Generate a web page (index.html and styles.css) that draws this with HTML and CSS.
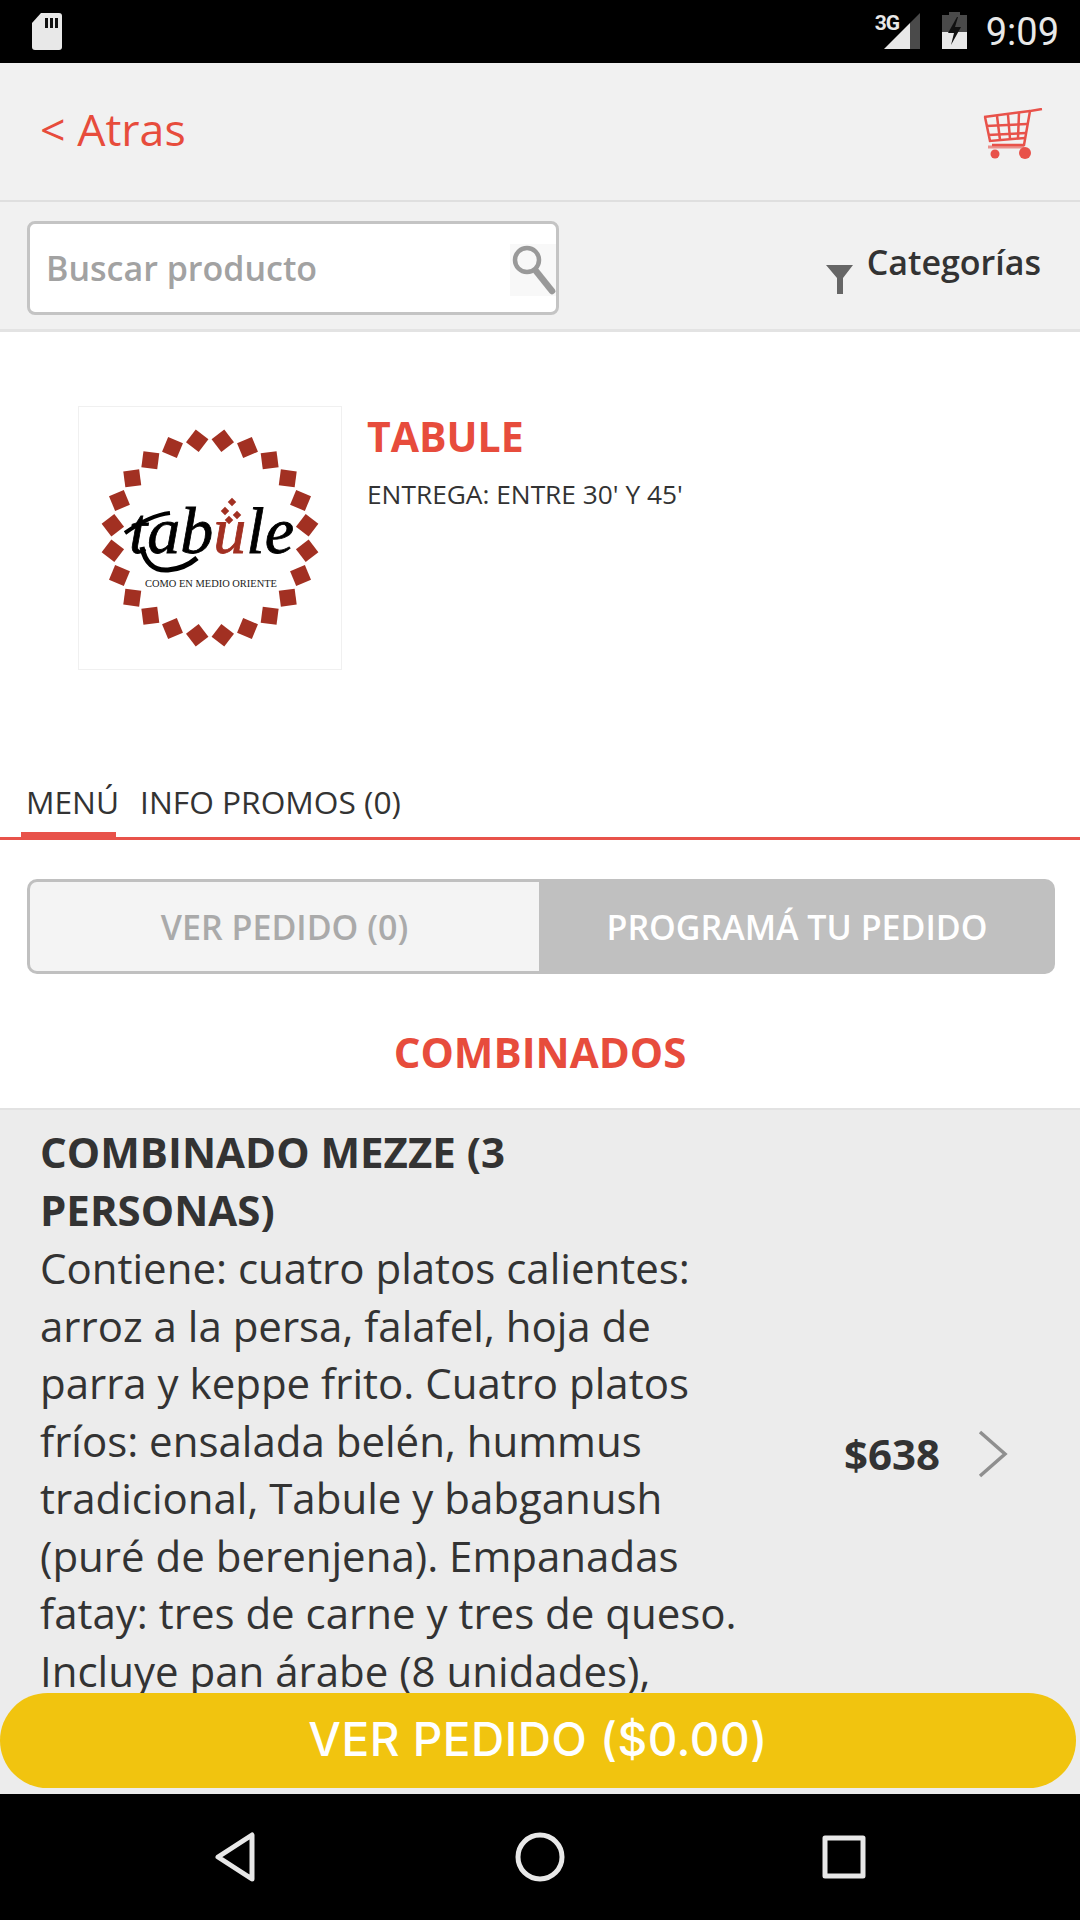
FILE: index.html
```html
<!DOCTYPE html>
<html lang="es">
<head>
    <meta charset="UTF-8">
    <meta name="viewport" content="width=device-width, initial-scale=1.0">
    <title>Tabule</title>
    <link rel="stylesheet" href="styles.css">
</head>
<body>
    <div class="screen">
        <div class="status-bar">
            <svg class="sd-icon" width="30" height="37" viewBox="0 0 30 37">
                <path d="M9 0h18a3 3 0 0 1 3 3v31a3 3 0 0 1-3 3H3a3 3 0 0 1-3-3V10z" fill="#e8e8e8"/>
                <path d="M13 5h3v10h-3zM18 5h3v10h-3zM23 5h3v10h-3z" fill="#111"/>
            </svg>
            <div class="status-right">
                <span class="net-label">3G</span>
                <svg class="signal-icon" width="36" height="36" viewBox="0 0 36 36">
                    <path d="M36 0v36H26V10z" fill="#4a4a4a"/>
                    <path d="M26 10v26H0z" fill="#e8e8e8"/>
                </svg>
                <svg class="battery-icon" width="25" height="37" viewBox="0 0 25 37">
                    <path d="M7 0h11v3h7v17H0V3h7z" fill="#4a4a4a"/>
                    <path d="M0 20h25v17H0z" fill="#e8e8e8"/>
                    <path d="M15 5L6 21h6l-3 12 10-18h-6l3-10z" fill="#111"/>
                </svg>
                <span class="clock">9:09</span>
            </div>
        </div>

        <div class="content">
            <div class="top-bar">
                <span class="back-link">&lt; Atras</span>
                <svg class="cart-icon" width="60" height="54" viewBox="0 0 60 54" fill="none" stroke="#e8524a">
                    <path d="M59 1L47 3l-6 34H9" stroke-width="2.5"/>
                    <path d="M1 9l46-6M3 18l41-2M5 27l38-2M2 9l5 24 35-3" stroke-width="2.5"/>
                    <path d="M14 8l3 24M25 7l2 24M36 5l-1 25" stroke-width="2.5"/>
                    <path d="M5 39h36" stroke-width="3" opacity=".6"/>
                    <circle cx="12" cy="46" r="4.5" fill="#e8524a" stroke="none"/>
                    <circle cx="42" cy="45" r="6" fill="#e8524a" stroke="none"/>
                </svg>
            </div>

            <div class="search-bar">
                <div class="search-box">
                    <span class="search-text">Buscar producto</span>
                    <svg class="search-icon" width="46" height="52" viewBox="0 0 46 52" fill="none" stroke="#999">
                        <rect width="46" height="52" fill="#f8f8f8" stroke="none"/>
                        <circle cx="17" cy="16" r="12" stroke-width="4.5"/>
                        <path d="M26 27l16 20" stroke-width="6.5" stroke-linecap="round"/>
                    </svg>
                </div>
                <div class="category-filter">
                    <svg class="filter-icon" width="27" height="29" viewBox="0 0 27 29">
                        <path d="M0 0h27L17 13v16h-6V13z" fill="#666"/>
                    </svg>
                    <span class="category-text">Categorías</span>
                </div>
            </div>

            <div class="shop-info">
                <div class="shop-logo">
                    <svg width="262" height="262" viewBox="0 0 262 262">
                        <defs>
                            <g id="quarter" fill="#a23022">
                                <rect x="123" y="25" width="16" height="16" transform="rotate(7.5 131 131) rotate(45 131 33)"/>
                                <rect x="123" y="25" width="16" height="16" transform="rotate(22.5 131 131) rotate(45 131 33)"/>
                                <rect x="123" y="25" width="16" height="16" transform="rotate(37.5 131 131) rotate(45 131 33)"/>
                                <rect x="123" y="25" width="16" height="16" transform="rotate(52.5 131 131) rotate(45 131 33)"/>
                                <rect x="123" y="25" width="16" height="16" transform="rotate(67.5 131 131) rotate(45 131 33)"/>
                                <rect x="123" y="25" width="16" height="16" transform="rotate(82.5 131 131) rotate(45 131 33)"/>
                            </g>
                        </defs>
                        <use href="#quarter"/>
                        <use href="#quarter" transform="rotate(90 131 131)"/>
                        <use href="#quarter" transform="rotate(180 131 131)"/>
                        <use href="#quarter" transform="rotate(270 131 131)"/>
                        <text class="logo-word" x="50" y="146">tab<tspan class="logo-red">u</tspan>le</text>
                        <rect x="150" y="92" width="6" height="6" fill="#a23022" transform="rotate(45 153 95)"/>
                        <rect x="143" y="101" width="6" height="6" fill="#a23022" transform="rotate(45 146 104)"/>
                        <rect x="155" y="105" width="6" height="6" fill="#a23022" transform="rotate(45 158 108)"/>
                        <rect x="147" y="110" width="6" height="6" fill="#a23022" transform="rotate(45 150 113)"/>
                        <path d="M46 126c14-10 28-18 45-20" fill="none" stroke="#000" stroke-width="4"/>
                        <path d="M63 140c3 16 12 24 26 23 13-1 22-6 29-12" fill="none" stroke="#000" stroke-width="5"/>
                        <text class="logo-tag" x="66" y="180" textLength="132" lengthAdjust="spacingAndGlyphs">COMO EN MEDIO ORIENTE</text>
                    </svg>
                </div>
                <div class="shop-details">
                    <h1 class="shop-name">TABULE</h1>
                    <p class="shop-delivery">ENTREGA: ENTRE 30' Y 45'</p>
                </div>
            </div>

            <div class="tabs">
                <span class="tab tab-active">MENÚ</span>
                <span class="tab">INFO PROMOS (0)</span>
            </div>

            <div class="order-buttons">
                <div class="order-btn order-btn-light">VER PEDIDO (0)</div>
                <div class="order-btn order-btn-dark">PROGRAMÁ TU PEDIDO</div>
            </div>

            <h2 class="section-title">COMBINADOS</h2>

            <div class="product">
                <div class="product-text">
                    <h3 class="product-name">COMBINADO MEZZE (3 PERSONAS)</h3>
                    <p class="product-desc">Contiene: cuatro platos calientes: arroz a la persa, falafel, hoja de parra y keppe frito. Cuatro platos fríos: ensalada belén, hummus tradicional, Tabule y babganush (puré de berenjena). Empanadas fatay: tres de carne y tres de queso. Incluye pan árabe (8 unidades),</p>
                </div>
                <span class="product-price">$638</span>
                <svg class="chevron" width="30" height="48" viewBox="0 0 30 48" fill="none" stroke="#8f8f8f" stroke-width="3.5">
                    <path d="M2 2l25 22L2 46"/>
                </svg>
            </div>

            <div class="cart-button">VER PEDIDO ($0.00)</div>
        </div>

        <div class="nav-bar">
            <svg width="40" height="50" viewBox="0 0 40 50" fill="none" stroke="#e8e8e8" stroke-width="5" stroke-linejoin="round">
                <path d="M37 3v44L3 25z"/>
            </svg>
            <svg width="50" height="50" viewBox="0 0 50 50" fill="none" stroke="#e8e8e8" stroke-width="5">
                <circle cx="25" cy="25" r="22"/>
            </svg>
            <svg width="44" height="44" viewBox="0 0 44 44" fill="none" stroke="#e8e8e8" stroke-width="5" stroke-linejoin="round">
                <rect x="3" y="3" width="38" height="38"/>
            </svg>
        </div>
    </div>
</body>
</html>
```

FILE: styles.css
```css
* {
    box-sizing: border-box;
}

body {
    margin: 0;
    background-color: #fff;
    font-family: "Open Sans", sans-serif;
}

.screen {
    width: 1080px;
    height: 1920px;
    display: flex;
    flex-direction: column;
    overflow: hidden;
}

.status-bar {
    height: 63px;
    flex: none;
    background-color: #000;
    display: flex;
    justify-content: space-between;
    align-items: flex-start;
    padding: 13px 21px 0 32px;
}

.status-right {
    display: flex;
    align-items: flex-start;
}

.net-label {
    font-family: Roboto, sans-serif;
    font-size: 21px;
    font-weight: 700;
    line-height: 20px;
    color: #e8e8e8;
    width: 24px;
    letter-spacing: -1px;
}

.signal-icon {
    margin-left: -15px;
}

.battery-icon {
    margin-left: 22px;
    margin-top: -1px;
}

.clock {
    font-family: Roboto, sans-serif;
    font-size: 38px;
    line-height: 36px;
    color: #e8e8e8;
    margin-left: 19px;
    margin-top: 1px;
}

.content {
    flex: 1;
    position: relative;
    overflow: hidden;
    display: flex;
    flex-direction: column;
}

.top-bar {
    height: 139px;
    flex: none;
    background-color: #f1f1f1;
    border-bottom: 2px solid #dfdfdf;
    display: flex;
    justify-content: space-between;
    align-items: center;
    padding: 0 37px 0 40px;
}

.back-link {
    font-size: 44.7px;
    line-height: 60px;
    margin-top: -5px;
    color: #e74c3c;
}

.cart-icon {
    margin-top: 6px;
}

.search-bar {
    height: 130px;
    flex: none;
    background-color: #f1f1f1;
    border-bottom: 3px solid #e3e3e3;
    display: flex;
    justify-content: space-between;
    padding: 19px 39px 0 27px;
}

.search-box {
    width: 532px;
    height: 94px;
    background-color: #fff;
    border: 3px solid #c4c4c4;
    border-radius: 8px;
    display: flex;
    justify-content: space-between;
    padding: 0 0 0 16px;
}

.search-text {
    font-size: 34px;
    font-weight: 600;
    color: #a2a2a2;
    line-height: 88px;
}

.search-icon {
    margin-top: 20px;
}

.category-filter {
    display: flex;
    align-items: flex-start;
}

.filter-icon {
    margin-top: 44px;
    margin-right: 14px;
}

.category-text {
    font-size: 34px;
    font-weight: 600;
    color: #333;
    line-height: 40px;
    margin-top: 21px;
}

.shop-info {
    height: 450px;
    flex: none;
    display: flex;
    padding: 74px 0 0 78px;
}

.shop-logo {
    width: 264px;
    height: 264px;
    border: 1px solid #f0f0f0;
}

.shop-logo svg {
    display: block;
}

.logo-word {
    font-family: "Liberation Serif", serif;
    font-style: italic;
    font-size: 66px;
    fill: #000;
    stroke: #000;
    stroke-width: 0.8px;
}

.logo-red {
    fill: #a23022;
    stroke: #a23022;
}

.logo-tag {
    font-family: "Liberation Serif", serif;
    font-size: 11px;
    fill: #222;
}

.shop-details {
    margin-left: 25px;
}

.shop-name {
    margin: 4px 0 0;
    font-size: 41px;
    font-weight: 700;
    line-height: 53px;
    color: #e74c3c;
}

.shop-delivery {
    margin: 13px 0 0;
    font-size: 26.3px;
    line-height: 36px;
    color: #333;
}

.tabs {
    height: 58px;
    flex: none;
    display: flex;
    gap: 21px;
    padding-left: 26px;
    border-bottom: 3px solid #e8524a;
}

.tab {
    font-size: 31.7px;
    line-height: 40px;
    color: #333;
    position: relative;
}

.tab-active::after {
    content: "";
    position: absolute;
    left: -5px;
    right: 3px;
    bottom: -3px;
    height: 8px;
    background-color: #e8524a;
}

.order-buttons {
    margin: 39px 25px 0 27px;
    height: 95px;
    flex: none;
    display: flex;
}

.order-btn {
    font-size: 34px;
    font-weight: 600;
    display: flex;
    justify-content: center;
    align-items: center;
}

.order-btn-light {
    width: 512px;
    background-color: #f4f4f4;
    color: #aaa;
    border: 3px solid #c0c0c0;
    border-right: none;
    border-radius: 10px 0 0 10px;
}

.order-btn-dark {
    flex: 1;
    background-color: #c0c0c0;
    color: #fff;
    border-radius: 0 10px 10px 0;
}

.section-title {
    margin: 0;
    height: 134px;
    flex: none;
    font-size: 42px;
    font-weight: 700;
    line-height: 156px;
    text-align: center;
    color: #e74c3c;
}

.product {
    height: 689px;
    flex: none;
    background-color: #ececec;
    border-top: 2px solid #e2e2e2;
    display: flex;
    align-items: center;
    padding-left: 40px;
}

.product-text {
    width: 700px;
    align-self: flex-start;
    margin-top: 13px;
}

.product-name {
    margin: 0;
    font-size: 42px;
    font-weight: 700;
    line-height: 57.5px;
    color: #333;
}

.product-desc {
    margin: 1px 0 0;
    font-size: 42px;
    line-height: 57.5px;
    color: #333;
}

.product-price {
    margin-left: 104px;
    font-size: 42px;
    font-weight: 700;
    color: #333;
}

.chevron {
    margin-left: 38px;
}

.cart-button {
    position: absolute;
    left: 0;
    top: 1630px;
    width: 1076px;
    height: 95px;
    padding-bottom: 4px;
    border-radius: 48px;
    background-color: #f1c40f;
    color: #fff;
    font-family: Inter, sans-serif;
    font-size: 46px;
    font-weight: 500;
    letter-spacing: 0.5px;
    display: flex;
    justify-content: center;
    align-items: center;
}

.nav-bar {
    height: 126px;
    flex: none;
    background-color: #000;
    display: flex;
    align-items: center;
    padding-left: 215px;
}

.nav-bar svg:nth-child(2) {
    margin-left: 260px;
}

.nav-bar svg:nth-child(3) {
    margin-left: 257px;
}
```
